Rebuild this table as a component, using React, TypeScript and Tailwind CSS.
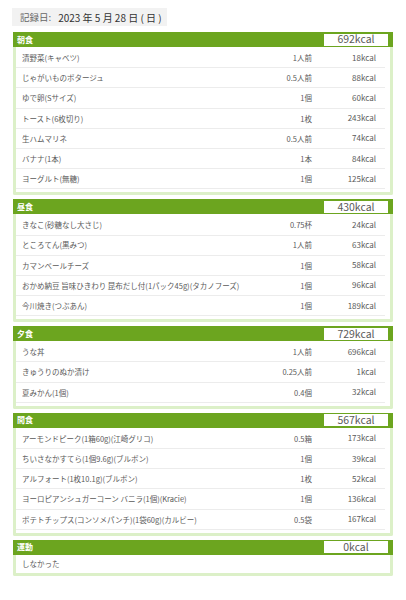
import React from 'react';

type Item = { name: string; qty: string; kcal: number };
type Meal = { label: string; total: string; items: Item[] };

const meals: Meal[] = [
  {
    label: '朝食',
    total: '692kcal',
    items: [
      { name: '漬野菜(キャベツ)', qty: '1人前', kcal: 18 },
      { name: 'じゃがいものポタージュ', qty: '0.5人前', kcal: 88 },
      { name: 'ゆで卵(Sサイズ)', qty: '1個', kcal: 60 },
      { name: 'トースト(6枚切り)', qty: '1枚', kcal: 243 },
      { name: '生ハムマリネ', qty: '0.5人前', kcal: 74 },
      { name: 'バナナ(1本)', qty: '1本', kcal: 84 },
      { name: 'ヨーグルト(無糖)', qty: '1個', kcal: 125 },
    ],
  },
  {
    label: '昼食',
    total: '430kcal',
    items: [
      { name: 'きなこ(砂糖なし大さじ)', qty: '0.75杯', kcal: 24 },
      { name: 'ところてん(黒みつ)', qty: '1人前', kcal: 63 },
      { name: 'カマンベールチーズ', qty: '1個', kcal: 58 },
      { name: 'おかめ納豆 旨味ひきわり 昆布だし付(1パック45g)(タカノフーズ)', qty: '1個', kcal: 96 },
      { name: '今川焼き(つぶあん)', qty: '1個', kcal: 189 },
    ],
  },
  {
    label: '夕食',
    total: '729kcal',
    items: [
      { name: 'うな丼', qty: '1人前', kcal: 696 },
      { name: 'きゅうりのぬか漬け', qty: '0.25人前', kcal: 1 },
      { name: '夏みかん(1個)', qty: '0.4個', kcal: 32 },
    ],
  },
  {
    label: '間食',
    total: '567kcal',
    items: [
      { name: 'アーモンドピーク(1箱60g)(江崎グリコ)', qty: '0.5箱', kcal: 173 },
      { name: 'ちいさなかすてら(1個9.6g)(ブルボン)', qty: '1個', kcal: 39 },
      { name: 'アルフォート(1枚10.1g)(ブルボン)', qty: '1枚', kcal: 52 },
      { name: 'ヨーロピアンシュガーコーン バニラ(1個)(Kracie)', qty: '1個', kcal: 136 },
      { name: 'ポテトチップス(コンソメパンチ)(1袋60g)(カルビー)', qty: '0.5袋', kcal: 167 },
    ],
  },
];

const font = { fontFamily: '"Noto Sans CJK JP", "Noto Sans", sans-serif' };

const PanelHeader: React.FC<{ label: string; total: string }> = ({ label, total }) => (
  <div className="h-[15px] bg-[#6ca51f] flex items-center justify-between pl-[4px] pr-[5px]">
    <span className="text-[8px] font-bold text-white leading-none">{label}</span>
    <div className="w-[64px] h-[12px] bg-white flex items-center justify-center text-[10.5px] text-[#5a5a5a] leading-none">
      {total}
    </div>
  </div>
);

const MealPanel: React.FC<{ meal: Meal }> = ({ meal }) => (
  <div className="w-[380px] ml-[13px]">
    <PanelHeader label={meal.label} total={meal.total} />
    <div className="border-x-[3px] border-b-[3px] border-[#dcf0c8] pr-[5px] pt-[1px] pb-[3px] bg-white rounded-b-[2px]">
      {meal.items.map((it) => (
        <div key={it.name} className="h-[20.2px] flex items-center border-b border-[#ececec] pl-[6px] pr-[9px] text-[7.5px] text-[#5a5a5a]">
          <span className="flex-1 truncate">{it.name}</span>
          <span className="text-right">{it.qty}</span>
          <span className="w-[64px] text-right text-[8px]">{it.kcal}kcal</span>
        </div>
      ))}
    </div>
  </div>
);

export default function App() {
  return (
    <div className="w-[406px] h-[600px] bg-white pt-[8px]" style={font}>
      <div className="ml-[12px] w-[155px] h-[18px] bg-[#f2f2f2] flex items-center pl-[8px] gap-[7px]">
        <span className="text-[9.5px] text-[#666]">記録日:</span>
        <span className="text-[10px] text-[#333]">2023 年 5 月 28 日 ( 日 )</span>
      </div>
      <div className="mt-[6px] flex flex-col gap-[4px]">
        {meals.map((m) => (
          <MealPanel key={m.label} meal={m} />
        ))}
        <div className="w-[380px] ml-[13px]">
          <PanelHeader label="運動" total="0kcal" />
          <div className="border-x-[3px] border-b-[3px] border-[#dcf0c8] pr-[5px] bg-white rounded-b-[2px]">
            <div className="h-[18px] flex items-center pl-[6px] text-[7.5px] text-[#5a5a5a]">しなかった</div>
          </div>
        </div>
      </div>
    </div>
  );
}
